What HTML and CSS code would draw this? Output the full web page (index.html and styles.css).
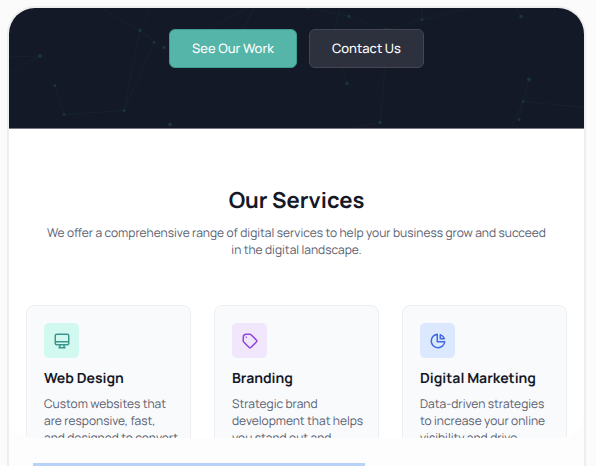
FILE: index.html
```html
<!DOCTYPE html>
<html lang="en">
<head>
<meta charset="utf-8">
<meta name="viewport" content="width=device-width, initial-scale=1">
<title>Our Services</title>
<link rel="stylesheet" href="styles.css">
</head>
<body>
<div class="frame">
  <main class="preview">
    <section class="hero">
      <svg class="network" viewBox="0 0 575 121" preserveAspectRatio="xMidYMid slice" aria-hidden="true">
        <g class="network-lines">
          <path d="M0 49.500 31 48.500 0 66M46 78 55 107 115 103 145 35 131 23 115 103M90 0 131 23 156 40M131 23 142 0M299 0 340 9 377 22 413 12 462 0M324 31 338 76M377 22 375 70 371 115 340 121M413 12V0M331 0 324 31M507 0 512 9M520 72 514 94 510 112M514 94 502 121M514 94 575 100M245 0 233 24M239 0 202 20"/>
        </g>
        <g class="network-dots">
          <circle cx="31" cy="48.500" r="2"/><circle cx="46" cy="78" r="1.500"/><circle cx="55" cy="107" r="1.500"/><circle cx="115" cy="103" r="1.500"/><circle cx="131" cy="23" r="1.700"/><circle cx="145" cy="35" r="1.500"/><circle cx="155" cy="40" r="1.700"/><circle cx="161" cy="117" r="2"/><circle cx="299" cy="0" r="2"/><circle cx="340" cy="9" r="1.700"/><circle cx="377" cy="22" r="1.700"/><circle cx="324" cy="31" r="1.500"/><circle cx="338" cy="76" r="1.700"/><circle cx="371" cy="115" r="1.700"/><circle cx="413" cy="12" r="1.500"/><circle cx="512" cy="9" r="1.800"/><circle cx="520" cy="72" r="2"/><circle cx="514" cy="94" r="1.500"/><circle cx="510" cy="112" r="1.500"/>
        </g>
      </svg>
      <div class="actions">
        <button class="button button-primary" type="button">See Our Work</button>
        <button class="button button-secondary" type="button">Contact Us</button>
      </div>
    </section>
    <section class="services">
      <h2 class="services-title">Our Services</h2>
      <p class="services-intro">We offer a comprehensive range of digital services to help your business grow and succeed in the digital landscape.</p>
      <div class="cards">
        <article class="card">
          <div class="tile tile-teal">
            <svg class="icon" viewBox="0 0 24 24" aria-hidden="true"><path d="M9.750 17 9 20l-1 1h8l-1-1-.750-3M3 13h18M5 17h14a2 2 0 0 0 2-2V5a2 2 0 0 0-2-2H5a2 2 0 0 0-2 2v10a2 2 0 0 0 2 2z"/></svg>
          </div>
          <h3 class="card-title">Web Design</h3>
          <p class="card-text">Custom websites that<br>are responsive, fast,<br>and designed to convert</p>
        </article>
        <article class="card">
          <div class="tile tile-purple">
            <svg class="icon" viewBox="0 0 24 24" aria-hidden="true"><path d="M7 7h.010M7 3h5c.512 0 1.024.195 1.414.586l7 7a2 2 0 0 1 0 2.828l-7 7a2 2 0 0 1-2.828 0l-7-7A1.994 1.994 0 0 1 3 12V7a4 4 0 0 1 4-4z"/></svg>
          </div>
          <h3 class="card-title">Branding</h3>
          <p class="card-text">Strategic brand<br>development that helps<br>you stand out and</p>
        </article>
        <article class="card">
          <div class="tile tile-blue">
            <svg class="icon" viewBox="0 0 24 24" aria-hidden="true"><path d="M11 3.055A9.001 9.001 0 1 0 20.945 13H11V3.055z"/><path d="M20.488 9H15V3.512A9.025 9.025 0 0 1 20.488 9z"/></svg>
          </div>
          <h3 class="card-title">Digital Marketing</h3>
          <p class="card-text">Data-driven strategies<br>to increase your online<br>visibility and drive</p>
        </article>
      </div>
    </section>
  </main>
  <div class="below"><div class="highlight"></div></div>
</div>
</body>
</html>
```
FILE: styles.css
```css
* {
  box-sizing: border-box;
}

body {
  margin: 0;
  height: 100vh;
  padding: 6px 10px 0 7px;
  overflow: hidden;
  background: #fbfbfb;
  color: #141827;
  font-family: Manrope, Inter, "Liberation Sans", sans-serif;
  text-rendering: geometricPrecision;
}

h2,
h3,
p {
  margin: 0;
}

.frame {
  display: flex;
  flex-direction: column;
  height: 100%;
  border: 2px solid #eeeeee;
  border-bottom: 0;
  border-radius: 28px 28px 0 0;
  background: #fdfdfd;
}

.preview {
  flex: 1;
  min-height: 0;
  overflow: hidden;
  border-radius: 26px;
  background: #ffffff;
}

.hero {
  position: relative;
  padding: 21px 16px 60px;
  border-bottom: 1px solid #777b86;
  background: #131926;
}

.network {
  position: absolute;
  inset: 0;
  width: 100%;
  height: 100%;
}

.network-lines {
  fill: none;
  stroke: #17222c;
  stroke-width: 1;
}

.network-dots {
  fill: #1a343b;
}

.actions {
  position: relative;
  display: flex;
  justify-content: center;
  gap: 12px;
}

.button {
  height: 39px;
  padding: 0 22px 1px;
  border: 1px solid;
  border-radius: 6px;
  color: #ffffff;
  font: 500 13px/20px Manrope, Inter, "Liberation Sans", sans-serif;
  text-rendering: inherit;
}

.button-primary {
  border-color: #3d9d92;
  background: #55b5a8;
}

.button-secondary {
  border-color: #454654;
  background: #2c313d;
}

.services {
  padding: 54px 17px;
}

.services-title {
  font-size: 22px;
  font-weight: 700;
  line-height: 34px;
  text-align: center;
}

.services-intro {
  max-width: 504px;
  margin: 7px auto 47px;
  color: #5a6070;
  font-size: 12px;
  line-height: 17px;
  text-align: center;
}

.cards {
  display: grid;
  grid-template-columns: repeat(3, minmax(0, 1fr));
  gap: 23px;
}

.card {
  padding: 17px 8px 17px 17px;
  border: 1px solid #eceef1;
  border-radius: 8px;
  background: #f9fafc;
}

.tile {
  display: grid;
  place-items: center;
  width: 35px;
  height: 35px;
  margin-bottom: 11px;
  border-radius: 5px;
}

.tile-teal {
  background: #d2f9f0;
  color: #3b978d;
}

.tile-purple {
  background: #f0e7fd;
  color: #8f45dc;
}

.tile-blue {
  background: #dce8fd;
  color: #4169e1;
}

.icon {
  width: 18px;
  height: 18px;
  fill: none;
  stroke: currentColor;
  stroke-width: 2;
  stroke-linecap: round;
  stroke-linejoin: round;
}

.card-title {
  margin-bottom: 6px;
  font-size: 14px;
  font-weight: 700;
  line-height: 20px;
  white-space: nowrap;
}

.card-text {
  color: #5a6070;
  font-size: 12px;
  line-height: 17px;
}

.below {
  flex: none;
  padding: 25px 24px 0;
}

.highlight {
  width: 63%;
  height: 3px;
  background: #b9d3f8;
}
```
